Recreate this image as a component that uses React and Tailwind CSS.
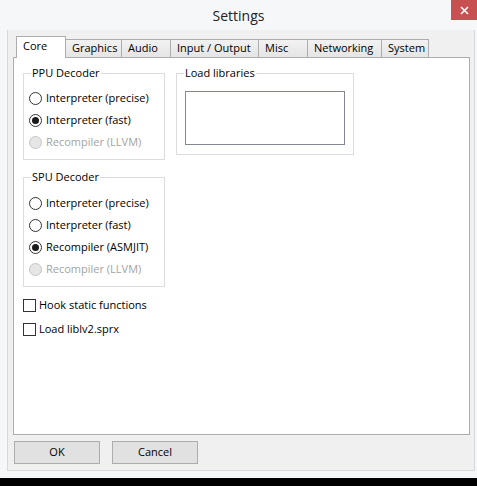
import React from "react";

const tabs = [
  { name: "Core", w: "w-[50px]", active: true },
  { name: "Graphics", w: "w-[57px]" },
  { name: "Audio", w: "w-[50px]" },
  { name: "Input / Output", w: "w-[89px]" },
  { name: "Misc", w: "w-[50px]" },
  { name: "Networking", w: "w-[75px]" },
  { name: "System", w: "w-[48px]" },
];

function Radio({ label, checked, disabled }) {
  return (
    <div className="flex h-[22px] items-center pl-[5px]">
      <span
        className={
          disabled
            ? "flex h-[13px] w-[13px] items-center justify-center rounded-full border border-[#c4c4c4] bg-[#e6e6e6]"
            : "flex h-[13px] w-[13px] items-center justify-center rounded-full border border-[#333333] bg-white"
        }
      >
        {checked && <span className="h-[7px] w-[7px] rounded-full bg-[#1a1a1a]" />}
      </span>
      <span className={disabled ? "ml-[4px] text-[#a3a3a3]" : "ml-[4px] text-black"}>{label}</span>
    </div>
  );
}

function Check({ label }) {
  return (
    <div className="flex h-[24px] items-center">
      <span className="h-[13px] w-[13px] border border-[#333333] bg-white" />
      <span className="ml-[3px]">{label}</span>
    </div>
  );
}

function Group({ title, className, children }) {
  return (
    <fieldset className={"border border-[#dcdcdc] " + className}>
      <legend className="ml-[7px] px-[1px] leading-[16px]">{title}</legend>
      {children}
    </fieldset>
  );
}

export default function App() {
  return (
    <div className="h-[486px] w-[477px] bg-black font-['Segoe_UI','Open_Sans',sans-serif] text-[11px] text-black">
      <div className="flex h-[478px] flex-col bg-[#f6f7f9]">
        {/* Title bar */}
        <div className="relative flex h-[30px] shrink-0 items-center justify-center">
          <span className="text-[14px] text-[#222222]">Settings</span>
          <div className="absolute right-0 top-0 flex h-[20px] w-[26px] items-center justify-center bg-[#c75050]">
            <svg width="9" height="9" viewBox="0 0 9 9">
              <path d="M1 1 L8 8 M8 1 L1 8" stroke="white" strokeWidth="1.6" />
            </svg>
          </div>
        </div>

        {/* Client area */}
        <div className="mx-[7px] mr-[2px] flex flex-1 flex-col border-x border-b border-[#d6d8db] bg-[#f0f0f0] pb-[6px] pl-[5px] pr-[4px] pt-[6px]">
          {/* Tabs */}
          <div className="flex h-[21px] items-end pl-[3px]">
            {tabs.map((t) =>
              t.active ? (
                <div
                  key={t.name}
                  className={"relative z-10 -mb-px flex h-[22px] items-center border border-b-0 border-[#adadad] bg-white pb-[2px] pl-[6px] " + t.w}
                >
                  {t.name}
                </div>
              ) : (
                <div
                  key={t.name}
                  className={"-ml-px flex h-[18px] items-center border border-b-0 border-[#adadad] bg-linear-to-b from-[#f2f2f2] to-[#e5e5e5] pl-[6px] " + t.w}
                >
                  {t.name}
                </div>
              )
            )}
          </div>

          {/* Pane */}
          <div className="flex h-[378px] gap-[11px] border border-[#adadad] bg-white pl-[9px] pt-[7px]">
            <div className="flex w-[142px] flex-col">
              <Group title="PPU Decoder" className="pb-[6px] pt-[6px]">
                <Radio label="Interpreter (precise)" />
                <Radio label="Interpreter (fast)" checked />
                <Radio label="Recompiler (LLVM)" disabled />
              </Group>
              <Group title="SPU Decoder" className="mt-[9px] pb-[6px] pt-[7px]">
                <Radio label="Interpreter (precise)" />
                <Radio label="Interpreter (fast)" />
                <Radio label="Recompiler (ASMJIT)" checked />
                <Radio label="Recompiler (LLVM)" disabled />
              </Group>
              <div className="mt-[6px] flex flex-col">
                <Check label="Hook static functions" />
                <Check label="Load liblv2.sprx" />
              </div>
            </div>
            <div className="w-[178px]">
              <Group title="Load libraries" className="pb-[9px] pt-[10px]">
                <div className="ml-[8px] h-[54px] w-[160px] border border-[#828790] bg-white" />
              </Group>
            </div>
          </div>

          {/* Buttons */}
          <div className="mt-[6px] flex gap-[12px] pl-[1px]">
            <button className="flex h-[23px] w-[86px] items-center justify-center border border-[#adadad] bg-[#e1e1e1]">
              OK
            </button>
            <button className="flex h-[23px] w-[86px] items-center justify-center border border-[#adadad] bg-[#e1e1e1]">
              Cancel
            </button>
          </div>
        </div>
        <div className="h-[7px] shrink-0" />
      </div>
    </div>
  );
}
